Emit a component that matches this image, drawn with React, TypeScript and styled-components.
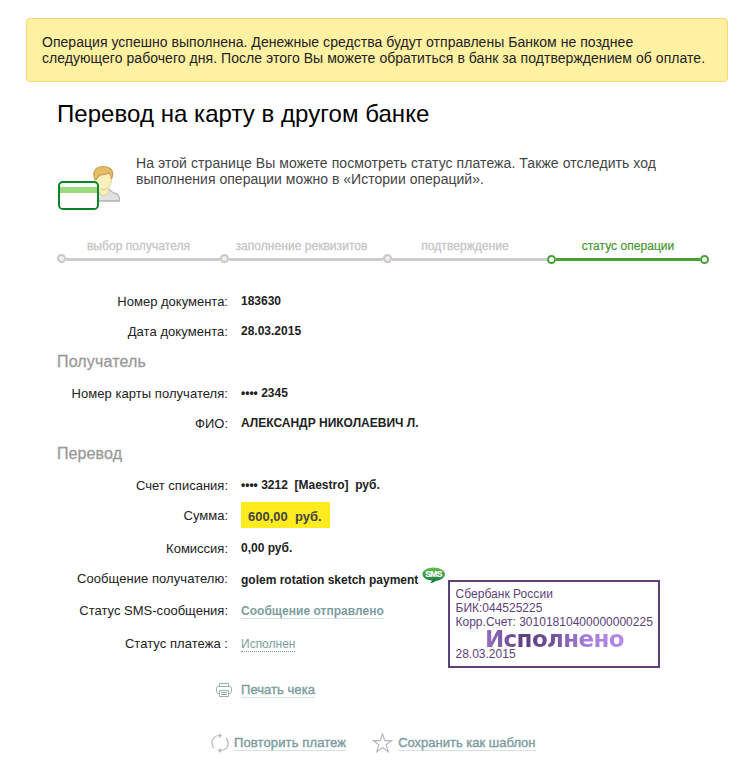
import React from "react";
import styled, { createGlobalStyle } from "styled-components";

const GlobalStyle = createGlobalStyle`
  *, *::before, *::after { box-sizing: border-box; }
  body { margin: 0; background: #fff; font-family: "Liberation Sans", Arial, sans-serif; color: #222; }
`;

const Page = styled.main`
  position: relative;
  width: 749px;
  height: 763px;
  padding-top: 18px;
  overflow: hidden;
`;

const Notice = styled.div`
  width: 702px;
  height: 64px;
  margin-left: 26px;
  padding: 15px 15px;
  border: 1px solid #fcd47c;
  border-radius: 4px;
  background: #fff1a2;
  font-size: 14px;
  line-height: 16px;
  color: #222;
`;

const Line = styled.span<{ $spacing?: number }>`
  display: block;
  white-space: pre;
  letter-spacing: ${({ $spacing = 0 }) => $spacing}px;
`;

const Content = styled.section`
  margin: 0 40px 0 57px;
`;

const Title = styled.h1`
  margin: 18px 0 0;
  font-size: 24px;
  line-height: 28px;
  font-weight: 400;
  letter-spacing: 0.05px;
  color: #000;
  white-space: nowrap;
`;

const Intro = styled.div`
  display: flex;
  height: 58px;
  margin-top: 27px;
`;

const IntroIcon = styled.svg`
  width: 64px;
  height: 48px;
  margin: 8px 15px 0 0;
  flex: none;
`;

const IntroText = styled.div`
  font-size: 14px;
  line-height: 16px;
  color: #444;
`;

const Steps = styled.div`
  display: grid;
  grid-template-columns: 163px 163px 164px 162px;
  height: 31px;
  margin-top: 26px;
`;

const Step = styled.div<{ $active?: boolean }>`
  display: flex;
  flex-direction: column;
  color: ${({ $active }) => ($active ? "#46972f" : "#c4c4c4")};
  font-size: 12px;
  line-height: 14px;
  text-align: center;
  white-space: nowrap;
  -webkit-text-stroke: ${({ $active }) => ($active ? "0.2px #46972f" : "0.3px #c8c8c8")};
`;

const Track = styled.div`
  display: flex;
  align-items: flex-start;
  height: 10px;
  margin-top: 1px;
`;

const Dot = styled.i<{ $active?: boolean }>`
  flex: none;
  width: 9px;
  height: 9px;
  margin-top: ${({ $active }) => ($active ? 1 : 0)}px;
  border: 2px solid ${({ $active }) => ($active ? "#4a9e36" : "#cac8c0")};
  border-radius: 50%;
  background: ${({ $active }) => ($active ? "#fff" : "#eee")};
`;

const Bar = styled.i<{ $active?: boolean }>`
  flex: 1;
  height: 3px;
  margin-top: 4px;
  background: ${({ $active }) => ($active ? "#4a9e36" : "#ccc")};
`;

const Form = styled.div`
  margin-top: 16px;
`;

const Row = styled.div<{ $height: number }>`
  display: grid;
  grid-template-columns: 171px 1fr;
  column-gap: 13px;
  align-items: center;
  height: ${({ $height }) => $height}px;
`;

const Label = styled.div<{ $spacing?: number; $drop?: number }>`
  padding-top: ${({ $drop = 2 }) => $drop}px;
  text-align: right;
  font-size: 13px;
  line-height: 16px;
  letter-spacing: ${({ $spacing = 0 }) => $spacing}px;
  white-space: nowrap;
`;

const Value = styled.div<{ $drop?: number }>`
  display: flex;
  align-items: center;
  padding-top: ${({ $drop = 0 }) => $drop}px;
  font-size: 12px;
  line-height: 16px;
  font-weight: 700;
  white-space: pre;
`;

const Heading = styled.h2<{ $spacing?: number }>`
  height: 32px;
  margin: 0;
  font-size: 16px;
  line-height: 31px;
  font-weight: 400;
  color: #999;
  -webkit-text-stroke: 0.3px #999;
  letter-spacing: ${({ $spacing = 0 }) => $spacing}px;
`;

const Amount = styled.span`
  width: 89px;
  height: 26px;
  margin-top: -2px;
  padding-left: 7px;
  background: #ffec1f;
  color: #444;
  font-size: 13px;
  line-height: 29px;
`;

const Link = styled.a<{ $dotted?: boolean; $bold?: boolean; $spacing?: number; $size?: number }>`
  height: 16px;
  border-bottom: 1px ${({ $dotted }) => ($dotted ? "dotted #7d9d9e" : "solid #d5e3e1")};
  color: #7d9d9e;
  font-size: ${({ $size = 12 }) => $size}px;
  font-weight: ${({ $bold }) => ($bold ? 700 : 400)};
  line-height: 16px;
  letter-spacing: ${({ $spacing = 0 }) => $spacing}px;
  white-space: nowrap;
  -webkit-text-stroke: ${({ $bold, $dotted }) => ($bold || $dotted ? "0" : "0.4px #7d9d9e")};
`;

const SmsIcon = styled.svg`
  width: 24px;
  height: 18px;
  margin: -9px 0 0 4px;
  flex: none;
`;

const Stamp = styled.aside`
  position: absolute;
  left: 448px;
  top: 580px;
  width: 212px;
  height: 88px;
  padding: 5px 5.5px;
  border: 2px solid #5c427a;
  color: #5c427a;
  font-size: 12px;
  line-height: 14px;
`;

const StampTitle = styled.div`
  position: absolute;
  left: 35px;
  top: 43px;
  font: 700 23px/28px "DejaVu Sans", Verdana, sans-serif;
  letter-spacing: -0.63px;
  background: linear-gradient(90deg, #9670c6 0%, #5d3f80 28%, #75549c 50%, #a67ddb 72%, #b48be8 100%);
  background-clip: text;
  -webkit-background-clip: text;
  color: transparent;
`;

const StampDate = styled.div`
  margin-top: 18px;
`;

const Actions = styled.div<{ $indent: number; $top: number }>`
  display: flex;
  align-items: center;
  height: 22px;
  margin: ${({ $top }) => $top}px 0 0 ${({ $indent }) => $indent}px;
`;

const ActionIcon = styled.svg<{ $gap: number; $tone?: string }>`
  flex: none;
  margin-right: ${({ $gap }) => $gap}px;
  fill: none;
  stroke: ${({ $tone = "#b8b8b8" }) => $tone};
  stroke-width: 1.2;
`;

const Spacer = styled.span`
  width: 26px;
`;

const steps = [
  { name: "выбор получателя", spacing: 0.06 },
  { name: "заполнение реквизитов", spacing: 0.04 },
  { name: "подтверждение", spacing: 0.06 },
  { name: "статус операции", spacing: 0.04, active: true },
];

export default function App() {
  return (
    <Page>
      <GlobalStyle />
      <Notice>
        <Line $spacing={0.03}>Операция успешно выполнена. Денежные средства будут отправлены Банком не позднее</Line>
        <Line $spacing={0.05}>следующего рабочего дня. После этого Вы можете обратиться в банк за подтверждением об оплате.</Line>
      </Notice>
      <Content>
        <Title>Перевод на карту в другом банке</Title>
        <Intro>
          <IntroIcon viewBox="0 0 64 48">
            <path d="M40 38v-7l7-4h6c1 2 3 2.500 5 3.200 3 1.200 4.300 3 4.300 5.300V38z" fill="#e2e2e2" stroke="#b3b3b3" strokeWidth="1.3" />
            <path d="M38 10c1-4 4-5 8-5s8 1 8.500 6c.4 3 .2 8-1.500 11.500-.6 1.500-1.200 2-1.200 3v4.500c-2 2.500-6 3-8.300 1.500L38 22z" fill="#fbf0bd" stroke="#dccb98" strokeWidth="1" />
            <path d="M38 16.500C34.500 8.500 39 3.500 46 3.500S57 7.500 55.300 13.500l-.8 2.500c-.4-2.500-1-4.500-2.300-6-2.700 1.700-6 1.500-8.700 2-2.500.6-3 3-4.200 4.500z" fill="#e5bd66" stroke="#c79c4c" strokeWidth="1.100" />
            <path d="M43 25.500c2 1.500 5 1.500 8-.5" fill="none" stroke="#dac68c" />
            <rect x="2" y="19" width="39" height="27" rx="3.800" fill="#fffefa" stroke="#068426" strokeWidth="2" />
            <path d="M3 24h37v6H3z" fill="#9cda80" />
          </IntroIcon>
          <IntroText>
            <Line $spacing={0.075}>На этой странице Вы можете посмотреть статус платежа. Также отследить ход</Line>
            <Line $spacing={0.015}>выполнения операции можно в «Истории операций».</Line>
          </IntroText>
        </Intro>
        <Steps>
          {steps.map((s) => (
            <Step key={s.name} $active={s.active}>
              <Line $spacing={s.spacing}>{s.name}</Line>
              <Track>
                <Dot $active={s.active} />
                <Bar $active={s.active} />
                {s.active && <Dot $active />}
              </Track>
            </Step>
          ))}
        </Steps>
        <Form>
          <Row $height={30}>
            <Label>Номер документа:</Label>
            <Value>183630</Value>
          </Row>
          <Row $height={30}>
            <Label $spacing={0.06}>Дата документа:</Label>
            <Value>28.03.2015</Value>
          </Row>
          <Heading $spacing={0.15}>Получатель</Heading>
          <Row $height={30}>
            <Label $spacing={0.05}>Номер карты получателя:</Label>
            <Value>•••• 2345</Value>
          </Row>
          <Row $height={30}>
            <Label>ФИО:</Label>
            <Value>АЛЕКСАНДР НИКОЛАЕВИЧ Л.</Value>
          </Row>
          <Heading $spacing={0.1}>Перевод</Heading>
          <Row $height={30}>
            <Label>Счет списания:</Label>
            <Value>•••• 3212  [Maestro]  руб.</Value>
          </Row>
          <Row $height={32}>
            <Label $drop={0}>Сумма:</Label>
            <Value><Amount>600,00  руб.</Amount></Value>
          </Row>
          <Row $height={32}>
            <Label>Комиссия:</Label>
            <Value>0,00 руб.</Value>
          </Row>
          <Row $height={30}>
            <Label $drop={0} $spacing={0.06}>Сообщение получателю:</Label>
            <Value $drop={2}>
              golem rotation sketch payment
              <SmsIcon viewBox="0 0 24 18">
                <defs>
                  <linearGradient id="bubble" x2="0" y2="1">
                    <stop stopColor="#67bd4c" />
                    <stop offset="1" stopColor="#0b7840" />
                  </linearGradient>
                </defs>
                <path d="M11.500 .5C18 .5 23 3.500 23 7s-4 6.300-9.500 7c-1.500 1.500-3 2-5.500 2 1.500-1 1.800-1.500 1.800-2.500C4.500 13 .5 10.500 .5 7 .5 3.500 5 .5 11.500 .5z" fill="url(#bubble)" />
                <text x="11.500" y="10.200" textAnchor="middle" fontFamily="Liberation Sans" fontSize="8.500" fill="#fff" stroke="#fff" strokeWidth=".2" letterSpacing="-.6">SMS</text>
              </SmsIcon>
            </Value>
          </Row>
          <Row $height={34}>
            <Label $drop={0}>Статус SMS-сообщения:</Label>
            <Value><Link $bold $spacing={0.03}>Сообщение отправлено</Link></Value>
          </Row>
          <Row $height={32}>
            <Label $drop={0} $spacing={0.05}>Статус платежа :</Label>
            <Value><Link $dotted>Исполнен</Link></Value>
          </Row>
        </Form>
        <Actions $indent={159} $top={19}>
          <ActionIcon $gap={9} $tone="#94b0ad" width="16" height="16" viewBox="0 0 16 16">
            <path strokeWidth="1" d="M3.500 4.500v-3h9v3M3.500 11.500h-1c-1.300 0-2-.7-2-2v-3c0-1.300.7-2 2-2h11c1.300 0 2 .7 2 2v3c0 1.300-.7 2-2 2h-1M3.500 8.500h9v6h-9zM5 10.500h6M5 12.500h6" />
          </ActionIcon>
          <Link $size={13} $spacing={0.05}>Печать чека</Link>
        </Actions>
        <Actions $indent={154} $top={31}>
          <ActionIcon $gap={5} width="18" height="20" viewBox="0 0 18 20">
            <path d="M3.200 15.200C-.6 11.500 0 2.800 8.500 2.500h1M14.800 4.800c3.800 3.700 3.200 12.400-5.300 12.700h-1M8 .7l2.300 1.800L8 4.500M10 15.500l-2.300 2 2.300 1.800" />
          </ActionIcon>
          <Link $size={13} $spacing={0.12}>Повторить платеж</Link>
          <Spacer />
          <ActionIcon $gap={5} width="21" height="20" viewBox="0 0 21 20">
            <path d="M10.500 1l2.300 6.600h7l-5.600 4.200 2 6.900-5.700-4.200-5.700 4.200 2-6.900L1.200 7.600h7z" />
          </ActionIcon>
          <Link $size={13}>Сохранить как шаблон</Link>
        </Actions>
      </Content>
      <Stamp>
        <Line $spacing={0.04}>Сбербанк России</Line>
        <Line>БИК:044525225</Line>
        <Line $spacing={0.01}>Корр.Счет: 30101810400000000225</Line>
        <StampTitle>Исполнено</StampTitle>
        <StampDate>28.03.2015</StampDate>
      </Stamp>
    </Page>
  );
}
